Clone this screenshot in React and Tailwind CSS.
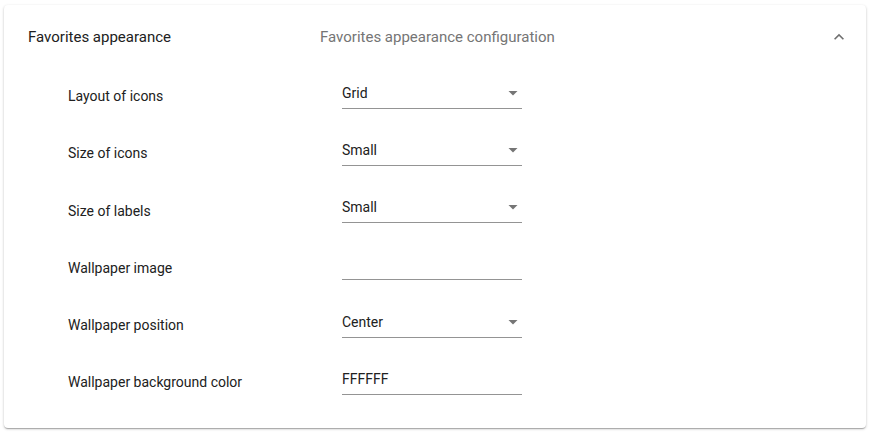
import React from 'react';

const rows = [
    { label: 'Layout of icons', value: 'Grid', select: true },
    { label: 'Size of icons', value: 'Small', select: true },
    { label: 'Size of labels', value: 'Small', select: true },
    { label: 'Wallpaper image', value: '', select: false },
    { label: 'Wallpaper position', value: 'Center', select: true },
    { label: 'Wallpaper background color', value: 'FFFFFF', select: false }
];

function Field({ value, select }) {
    return (
        <div className="relative flex items-start w-[180px] h-[26px] -mt-[2px] border-b border-[#949494]">
            <span className="leading-[20px] text-[14px] text-[#212121]">{value}</span>
            {select && (
                <svg className="absolute right-[-3px] top-[-2px] w-6 h-6" viewBox="0 0 24 24" fill="#757575">
                    <path d="M7.5 10l4.5 4.5 4.5-4.5z" />
                </svg>
            )}
        </div>
    );
}

function App() {
    return (
        <div className="min-h-screen bg-white pt-[5px] pl-1 pr-[7px] font-['Roboto',sans-serif]">
            <div className="rounded bg-white shadow-[0_1px_3px_rgba(0,0,0,0.2),0_1px_1px_rgba(0,0,0,0.14),0_2px_1px_-1px_rgba(0,0,0,0.12)]">
                {/* 标题栏 */}
                <div className="flex items-center h-[64px] px-6">
                    <div className="w-[292px] text-[15px] text-[#212121]">Favorites appearance</div>
                    <div className="flex-1 text-[15px] text-[#757575]">Favorites appearance configuration</div>
                    <svg className="w-5 h-5 mr-[-7px] mt-[-1px]" viewBox="0 0 24 24" fill="#6f6f6f">
                        <path d="M7.41 15.41L12 10.83l4.59 4.58L18 14l-6-6-6 6z" />
                    </svg>
                </div>
                {/* 设置项 */}
                <div className="pl-16 pb-[16px] -mt-px">
                    {rows.map((row) => (
                        <div key={row.label} className="flex items-center h-[57.25px]">
                            <div className="w-[274px] text-[14px] text-[#212121]">{row.label}</div>
                            <Field value={row.value} select={row.select} />
                        </div>
                    ))}
                </div>
            </div>
        </div>
    );
}

export default App;
